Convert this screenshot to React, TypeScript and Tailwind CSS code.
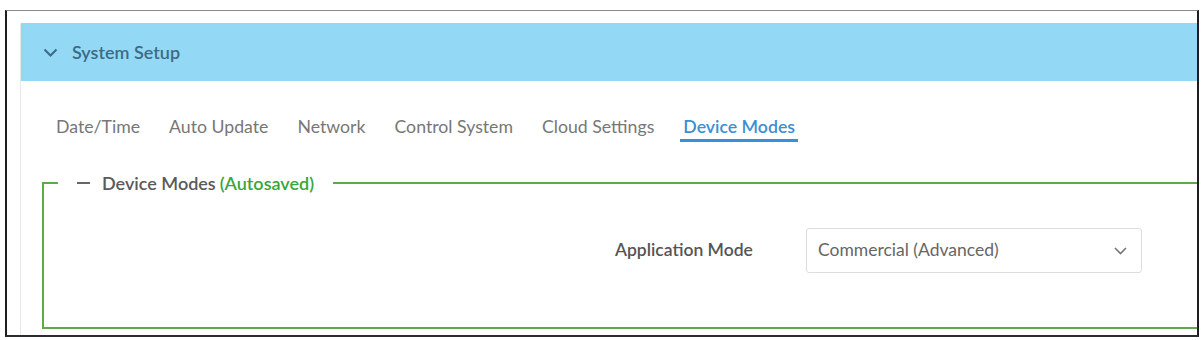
import React from "react";

const tabs = ["Date/Time", "Auto Update", "Network", "Control System", "Cloud Settings", "Device Modes"];

export default function App() {
  return (
    <div className="w-[1201px] h-[340px] bg-white pt-[10px] pl-[5px]" style={{ fontFamily: "Lato, 'Open Sans', sans-serif" }}>
      <div className="w-[1194px] h-[327px] border-t border-t-[#8a8a8a] border-l-2 border-r-2 border-b-2 border-l-[#1e1e1e] border-r-[#1e1e1e] border-b-[#2a2a33] overflow-hidden pt-[12px] pl-[13px]">
        <div className="h-full border-l border-[#e8e8e8]">
          <div className="h-[58px] bg-[#93d9f5] flex items-center pl-[22px] gap-[14px]">
            <svg width="15" height="9" viewBox="0 0 15 9" fill="none">
              <path d="M1.5 1.5 L7.5 7.5 L13.5 1.5" stroke="#3e6a86" strokeWidth="2" />
            </svg>
            <span className="text-[18px] font-semibold text-[#3e6a86]">System Setup</span>
          </div>
          <div className="flex items-start pl-[35px] pt-[34px] gap-[29px] h-[92px]">
            {tabs.map((t) => (
              <div
                key={t}
                className={
                  t === "Device Modes"
                    ? "text-[17.7px] font-semibold text-[#3b8fd4] border-b-[3px] border-[#3b8fd4] px-[3px] -mx-[3px] leading-[24px]"
                    : "text-[17.7px] text-[#777777] leading-[24px]"
                }
              >
                {t}
              </div>
            ))}
          </div>
          <fieldset className="ml-[21px] w-[1300px] h-[156px] border-2 border-[#5fa94a] pl-[14px]">
            <legend className="flex items-center px-[19px] h-[20px]">
              <span className="w-[13px] h-[2px] bg-[#666] mr-[12px]"></span>
              <span className="text-[18px] font-semibold text-[#5a5a5a]">Device Modes</span>
              <span className="text-[18px] font-semibold text-[#3aa53a] ml-[4px]">(Autosaved)</span>
            </legend>
            <div className="flex items-center pl-[557px] pt-[35px]">
              <span className="text-[17.5px] font-semibold text-[#555555] w-[191px]">Application Mode</span>
              <div className="w-[336px] h-[45px] border border-[#dddddd] rounded-[3px] flex items-center justify-between pl-[11px] pr-[14px]">
                <span className="text-[17.5px] text-[#666666]">Commercial (Advanced)</span>
                <svg width="13" height="8" viewBox="0 0 13 8" fill="none">
                  <path d="M1 1 L6.5 6.5 L12 1" stroke="#777" strokeWidth="1.6" />
                </svg>
              </div>
            </div>
          </fieldset>
        </div>
      </div>
    </div>
  );
}
